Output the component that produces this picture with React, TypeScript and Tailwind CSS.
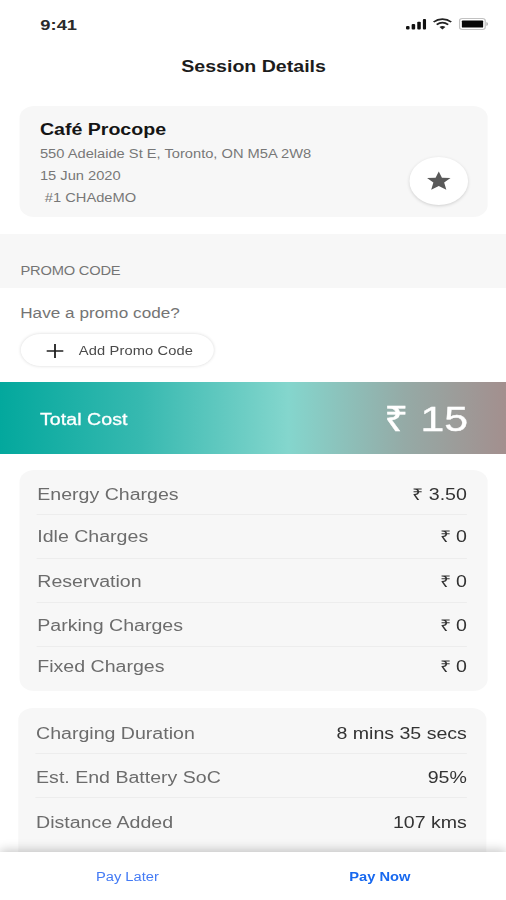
type Row = {
  label: string;
  value: string;
  className: string;
};

const charges: Row[] = [
  { label: "Energy Charges", value: "₹ 3.50", className: "h-[45px] pt-[5px]" },
  { label: "Idle Charges", value: "₹ 0", className: "h-[44px] pt-[1px]" },
  { label: "Reservation", value: "₹ 0", className: "h-[44px] pt-[3px]" },
  { label: "Parking Charges", value: "₹ 0", className: "h-[44px] pt-[3px]" },
  { label: "Fixed Charges", value: "₹ 0", className: "h-[44px] pb-[4px]" },
];

const stats: Row[] = [
  { label: "Charging Duration", value: "8 mins 35 secs", className: "h-[46px] pt-[7px]" },
  { label: "Est. End Battery SoC", value: "95%", className: "h-[44px] pt-[4px]" },
  { label: "Distance Added", value: "107 kms", className: "h-[48px] pt-[1px]" },
];

const StatusBar = () => {
  return (
    <div className="flex h-[47px] items-center justify-between pl-[33px] pr-[14px]">
      <span className="pt-[3px] text-[15px] font-bold text-[#2a2a2a]">9:41</span>

      {/* Signal, wifi and battery */}
      <div className="flex items-center gap-[5px]">
        <svg width="18" height="12" viewBox="0 0 18 12" fill="#111">
          <rect x="1.2" y="7.9" width="2.9" height="3.6" rx="1" />
          <rect x="5.8" y="6" width="2.9" height="5.5" rx="0.9" />
          <rect x="10.4" y="3.7" width="2.9" height="7.8" rx="0.9" />
          <rect x="15" y="1" width="2.6" height="10.5" rx="0.9" />
        </svg>
        <svg width="16" height="12" viewBox="0 0 16 12" fill="none" stroke="#222" strokeWidth="1.6">
          <path d="M0.8 4C5 0.1 11 0.1 15.2 4" />
          <path d="M3.3 6.7C6.2 4.2 9.8 4.2 12.7 6.7" />
          <path d="M8 11.4L5.6 9C7 7.8 9 7.8 10.4 9Z" fill="#222" stroke="none" />
        </svg>
        <svg width="25" height="12" viewBox="0 0 25 12">
          <rect x="1" y="0.5" width="21" height="11" rx="2.2" fill="#fff" stroke="#c2c2c2" />
          <rect x="2.9" y="2.6" width="17.4" height="6.9" rx="0.6" fill="#080808" />
          <path d="M23 4V8C24.6 7.3 24.6 4.7 23 4Z" fill="#aaa" />
        </svg>
      </div>
    </div>
  );
};

const Location = () => {
  return (
    <div className="ml-4 mr-[15px] flex h-[111px] justify-between rounded-xl bg-[#f7f7f7] pl-[16.7px] pr-[16px]">
      <div className="pt-[13px] text-xs leading-[22px] text-[#777]">
        <h2 className="text-base leading-[22px] font-bold text-[#151515]">Café Procope</h2>
        <p className="pt-[2px]">550 Adelaide St E, Toronto, ON M5A 2W8</p>
        <p>15 Jun 2020</p>
        <p className="pl-1">#1 CHAdeMO</p>
      </div>

      {/* Favourite button */}
      <button className="mt-[51px] flex size-12 shrink-0 items-center justify-center rounded-full bg-white shadow-[0_1px_3px_rgba(0,0,0,0.16)]">
        <svg width="20" height="20" viewBox="0 0 20 20" fill="#595959">
          <path d="M10 0.4L12.6 6.7L19.6 7.1L14.4 11.6L16.2 18.7L10 14.9L3.8 18.7L5.6 11.6L0.4 7.1L7.4 6.7Z" />
        </svg>
      </button>
    </div>
  );
};

const Rows = ({ rows }: { rows: Row[] }) => {
  return (
    <>
      {rows.map(({ label, value, className }) => (
        <div
          key={label}
          className={`flex items-center justify-between border-b border-[#ededed] text-base last:border-b-0 ${className}`}
        >
          <span className="pl-[0.5px] text-[#6c6c6c]">{label}</span>
          <span className="text-[#333]">{value}</span>
        </div>
      ))}
    </>
  );
};

const App = () => {
  return (
    <div className="h-[900px] w-[506px] overflow-hidden bg-white">
      {/* 414pt wide screen, widened to fill the frame */}
      <div className="flex h-[900px] w-[414px] origin-top-left scale-x-[1.2222] flex-col bg-white font-['Liberation_Sans',Arial,sans-serif]">
        <StatusBar />
        <h1 className="h-[59px] pt-[8px] pl-[1px] text-center text-base font-bold text-[#1c1c1c]">
          Session Details
        </h1>

        <Location />

        {/* Promo code */}
        <div className="mt-[17px] h-[54px] bg-[#f7f7f7] pt-[28px] pl-[16.7px] text-xs leading-[18px] tracking-[-0.15px] text-[#747474]">
          PROMO CODE
        </div>
        <div className="h-[94px] pl-[16.5px]">
          <p className="pt-[15px] text-sm tracking-[0.04px] text-[#747474]">Have a promo code?</p>
          <button className="mt-[11px] flex h-[32px] w-[158px] items-center gap-[13px] rounded-2xl bg-white pt-px pl-[21px] text-xs tracking-[0.1px] text-[#4a4a4a] shadow-[0_0_3px_rgba(0,0,0,0.16)]">
            <svg width="14" height="14" viewBox="0 0 14 14" stroke="#222" strokeWidth="1.5">
              <path d="M7 0V14M0 7H14" />
            </svg>
            Add Promo Code
          </button>
        </div>

        {/* Total */}
        <div className="flex h-[72px] items-center justify-between bg-[linear-gradient(90deg,#03a89d_0%,#37b9b0_28%,#84d6cd_57%,#95aaa6_80%,#a38f8e_100%)] pr-[31px] pl-[32.7px] text-white">
          <span className="pt-[3px] text-base tracking-[0.05px] [-webkit-text-stroke:0.3px_#fff]">
            Total Cost
          </span>
          <span className="pt-[3px] text-[35px] [-webkit-text-stroke:0.4px_#fff]">₹ 15</span>
        </div>

        {/* Charges */}
        <div className="mt-4 mr-[15px] ml-4 h-[221px] rounded-xl bg-[#f7f7f7] pr-[17px] pl-[14px]">
          <Rows rows={charges} />
        </div>

        {/* Session stats */}
        <div className="mt-[17px] mr-4 ml-[15px] h-[144px] rounded-t-xl bg-[#f7f7f7] pr-[16px] pl-[14px]">
          <Rows rows={stats} />
        </div>

        {/* Pay actions */}
        <div className="relative grid h-[48px] grid-cols-2 bg-white pl-px text-center text-xs leading-[50px] shadow-[0_-2px_9px_rgba(0,0,0,0.22)]">
          <button className="text-[#447bf5]">Pay Later</button>
          <button className="font-bold text-[#1768ef]">Pay Now</button>
        </div>
      </div>
    </div>
  );
};

export default App;
